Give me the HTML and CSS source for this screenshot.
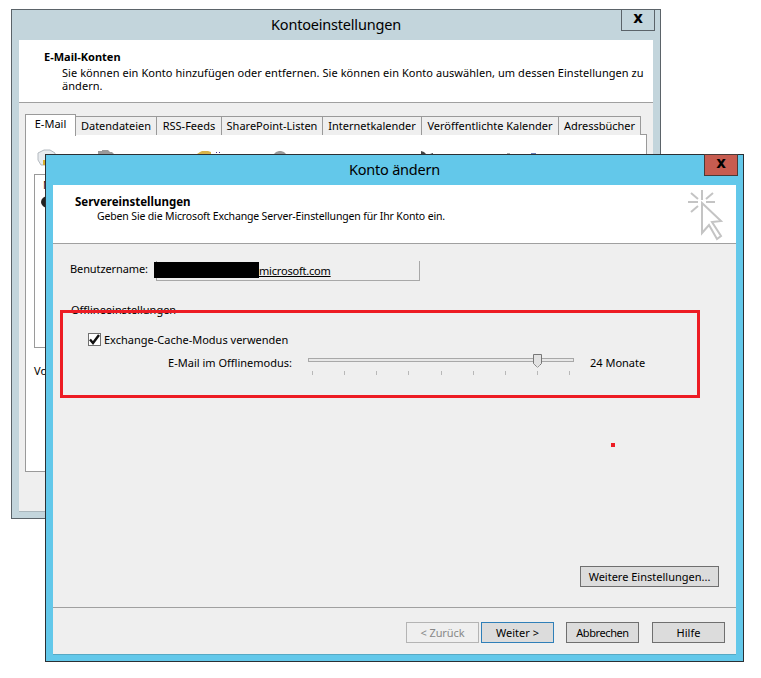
FILE: index.html
```html
<!DOCTYPE html>
<html lang="de">
<head>
<meta charset="utf-8">
<title>Konto ändern</title>
<link rel="stylesheet" href="styles.css">
</head>
<body>
<section class="window window-back">
  <header class="titlebar">
    <h1 class="title">Kontoeinstellungen</h1>
    <button class="close" aria-label="Schließen">x</button>
  </header>
  <div class="client">
    <div class="back-head">
      <h2 class="head-title">E-Mail-Konten</h2>
      <p class="head-text">Sie können ein Konto hinzufügen oder entfernen. Sie können ein Konto auswählen, um dessen Einstellungen zu ändern.</p>
    </div>
    <div class="back-body">
      <div class="tabs">
        <span class="tab tab-active">E-Mail</span>
        <span class="tab tab-1">Datendateien</span>
        <span class="tab tab-2">RSS-Feeds</span>
        <span class="tab tab-3">SharePoint-Listen</span>
        <span class="tab tab-4">Internetkalender</span>
        <span class="tab tab-5">Veröffentlichte Kalender</span>
        <span class="tab tab-6">Adressbücher</span>
      </div>
      <div class="pane">
        <svg class="toolbar" width="620" height="30" viewBox="0 0 620 30">
          <path d="M12 17l6-3h6l5 3v9l-4 3H15l-3-5z" fill="#e8ebee" stroke="#b4bac0"/>
          <path d="M17 24h6v5h-6z" fill="#d9b030"/>
          <path d="M72 18v-3h4v-1h6l2 2h2l2 2z" fill="#9a9a9a"/>
          <path d="M171 18l3-2 2-1h6l3 1v2z" fill="#d9b44a"/>
          <path d="M190 16h1v1h-1zM193 16h1v1h-1z" fill="#4b2a90"/>
          <path d="M248 18l2-2 3-1h2l3 1 2 2z" fill="#9a9a9a"/>
          <path d="M395 15l3 1 2 2h-5zM404 18l3-1v1z" fill="#444"/>
          <path d="M481 17h3v1h-3z" fill="#a8a8a8"/>
          <path d="M505 17h5v1h-5z" fill="#6b7fb8"/>
        </svg>
        <div class="listbox"><span class="list-head">Name</span><span class="list-dot"></span></div>
        <p class="pane-note">Vom</p>
      </div>
    </div>
  </div>
</section>

<section class="window window-front">
  <header class="titlebar titlebar-front">
    <h1 class="title">Konto ändern</h1>
    <button class="close close-front" aria-label="Schließen">x</button>
  </header>
  <div class="client">
    <div class="front-head">
      <h2 class="head-title head-title-front">Servereinstellungen</h2>
      <p class="head-sub">Geben Sie die Microsoft Exchange Server-Einstellungen für Ihr Konto ein.</p>
      <svg class="head-icon" width="40" height="54" viewBox="0 0 40 54" fill="none" stroke="#c4c4c4">
        <path stroke-width="2" d="M17 2v10M3 14h10M6 5l7 6M28 5l-7 6M21 14h9M6 24l7-6"/>
        <path stroke-width="2" d="M17 15l19 18-9 1 9 14-4 3-8-14-7 8z" fill="#fff"/>
      </svg>
    </div>
    <div class="front-body">
      <div class="user-row">
        <span class="user-label">Benutzername:</span>
        <div class="user-field"><span class="redact"></span><a class="user-link">microsoft.com</a></div>
      </div>
      <div class="group-label">Offlineeinstellungen</div>
      <label class="check-row">
        <span class="checkbox"><svg width="11" height="11" viewBox="0 0 11 11"><path d="M1 5.500l3 3.500 6-8" fill="none" stroke="#111" stroke-width="2.400"/></svg></span>
        <span>Exchange-Cache-Modus verwenden</span>
      </label>
      <div class="slider-row">
        <span class="slider-label">E-Mail im Offlinemodus:</span>
        <div class="slider">
          <div class="track"></div>
          <svg class="thumb" width="9" height="14" viewBox="0 0 9 14"><path d="M.5.5h8v9l-4 4-4-4z" fill="#e2e2e2" stroke="#777"/><path d="M1 10.500l3.500 3.500 3.500-3.500" fill="none" stroke="#efefef" stroke-dasharray="1 1"/></svg>
          <div class="ticks"><i></i><i></i><i></i><i></i><i></i><i></i><i></i><i></i><i></i></div>
        </div>
        <span class="slider-value">24 Monate</span>
      </div>
      <button class="btn btn-more">Weitere Einstellungen...</button>
    </div>
    <footer class="front-foot">
      <button class="btn btn-disabled" disabled>&lt; Zurück</button>
      <button class="btn btn-default">Weiter &gt;</button>
      <button class="btn btn-cancel">Abbrechen</button>
      <button class="btn btn-help">Hilfe</button>
    </footer>
  </div>
</section>

<div class="mark-box"></div>
<div class="mark-dot"></div>
</body>
</html>
```
FILE: styles.css
```css
* { box-sizing: border-box; }
html, body { margin: 0; padding: 0; }
body {
  width: 761px;
  height: 678px;
  position: relative;
  overflow: hidden;
  background: #fff;
  color: #000;
  font-family: "Noto Sans", "Open Sans", sans-serif;
  font-size: 11px;
  line-height: 15px;
}
h1, h2, p { margin: 0; font-weight: normal; }

.window { position: absolute; display: flex; flex-direction: column; }
.window-back {
  left: 11px; top: 9px; width: 650px; height: 510px;
  background: #c3d5dc;
  border: 1px solid #5b6369;
}
.window-front {
  left: 45px; top: 154px; width: 699px; height: 508px;
  background: #63c8ea;
  border: 1px solid #2b3034;
}
.titlebar {
  flex: none;
  height: 30px;
  display: flex;
  align-items: center;
  justify-content: center;
  position: relative;
}
.title { font-size: 14.500px; line-height: 28px; padding-bottom: 2px; letter-spacing: -.2px; }
.close {
  position: absolute;
  top: -1px; right: 5px;
  width: 34px; height: 22px;
  padding: 0 0 4px;
  background: transparent;
  border: 1px solid #5b6369;
  font: bold 15px/15px "DejaVu Sans", sans-serif;
  color: #000;
}
.close-front { background: #c75c50; border-color: #4a3a38; }

.client {
  flex: 1;
  display: flex;
  flex-direction: column;
  margin: 0 7px 7px;
  background: #efefef;
  min-height: 0;
}
.window-back .client { box-shadow: 0 1px 0 #aab6bc; }
.window-front .client { box-shadow: 0 1px 0 #57a9c4; }

.back-head {
  flex: none;
  height: 63px;
  background: #fff;
  border-bottom: 1px solid #a0a0a0;
  padding: 9px 10px 0 25px;
}
.head-title { font-size: 11px; line-height: 15px; font-weight: 700; }
.head-title-front { font-size: 11.500px; }
.head-text { padding-left: 18px; line-height: 13px; margin-top: 2px; width: 610px; letter-spacing: .05px; }

.back-body { flex: 1; padding: 11px 6px 0; display: flex; flex-direction: column; min-height: 0; }
.tabs { display: flex; align-items: flex-end; height: 22px; position: relative; z-index: 1; }
.tab {
  height: 19px;
  margin-bottom: 1px;
  padding-bottom: 2px;
  display: flex;
  align-items: center;
  justify-content: center;
  border: 1px solid #9a9a9a;
  border-left: 0;
  border-bottom: 0;
  background: #efefef;
}
.tab-active {
  width: 51px; height: 22px; margin-bottom: 0;
  align-items: flex-start;
  padding: 1px 0 0;
  border-left: 1px solid #9a9a9a;
  background: #fff;
}
.tab-1 { width: 81px; }
.tab-2 { width: 65px; }
.tab-3 { width: 101px; }
.tab-4 { width: 99px; }
.tab-5 { width: 137px; }
.tab-6 { width: 82px; }
.pane {
  width: 622px;
  height: 338px;
  margin-top: -2px;
  background: #fff;
  border: 1px solid #9a9a9a;
  padding-top: 1px;
}
.toolbar { display: block; }
.listbox {
  margin: 8px 8px 0;
  height: 174px;
  border: 1px solid #9a9a9a;
  position: relative;
  padding: 3px 0 0 8px;
}
.list-head { display: block; line-height: 14px; color: #301018; }
.list-dot {
  display: block;
  width: 14px; height: 12px;
  margin: 4px 0 0 -2px;
  border-radius: 50%;
  background: #222;
}
.pane-note { margin: 15px 0 0 8px; }

.front-head {
  flex: none;
  height: 59px;
  position: relative;
  background: #fff;
  border-bottom: 1px solid #a0a0a0;
  padding: 9px 0 0 22px;
}
.head-sub { padding-left: 22px; line-height: 15px; font-size: 10.500px; letter-spacing: -.15px; }
.head-icon { position: absolute; right: 11px; top: 3px; }

.front-body {
  flex: 1;
  display: flex;
  flex-direction: column;
  min-height: 0;
}
.user-row { display: flex; margin-top: 17px; height: 19px; }
.user-label { width: 103px; padding-left: 17px; line-height: 15px; letter-spacing: -.1px; }
.user-field {
  width: 264px;
  height: 20px;
  border-left: 1px solid #a8a8a8;
  border-right: 1px solid #a8a8a8;
  border-bottom: 1px solid #a8a8a8;
  display: flex;
  position: relative;
  padding-left: 102px;
  padding-top: 2px;
}
.redact { position: absolute; left: -3px; top: 1px; width: 105px; height: 16px; background: #000; }
.user-link { text-decoration: underline; line-height: 15px; letter-spacing: -.2px; }
.group-label { margin-top: 22px; padding-left: 18px; height: 15px; }
.check-row { display: flex; align-items: center; gap: 3px; margin-top: 15px; padding-left: 35px; height: 14px; }
.checkbox {
  width: 13px; height: 13px;
  border: 1px solid #707070;
  background: #fff;
  display: flex;
  align-items: center;
  justify-content: center;
}
.slider-row { display: flex; margin-top: 8px; height: 22px; }
.slider-label { width: 239px; text-align: right; padding-top: 1px; }
.slider { width: 266px; margin-left: 16px; position: relative; padding-top: 4px; }
.track { height: 4px; background: #e8e8e8; border: 1px solid #a8a8a8; }
.thumb { position: absolute; left: 225px; top: 0; display: block; }
.ticks { display: flex; justify-content: space-between; padding: 0 4px; margin-top: 9px; }
.ticks i { display: block; width: 1px; height: 4px; background: #b8b8b8; }
.slider-value { margin-left: 16px; padding-top: 1px; }

.btn {
  font: inherit;
  width: 73px;
  height: 21px;
  padding: 0;
  background: #dcdcdc;
  border: 1px solid #6f6f6f;
  color: #000;
}
.btn-more { flex: none; width: 139px; margin: auto 17px 20px auto; }
.btn-disabled { background: #efefef; border-color: #b4b4b4; color: #888; font-size: 11px; letter-spacing: -.1px; }
.btn-default { border-color: #2f7fb8; margin-left: 2px; }
.btn-cancel { margin-left: 12px; font-size: 11px; letter-spacing: -.4px; }
.btn-help { margin-left: 13px; }
.front-foot {
  flex: none;
  height: 47px;
  border-top: 1px solid #a0a0a0;
  display: flex;
  justify-content: flex-end;
  padding: 14px 11px 0 0;
}

.mark-box {
  position: absolute;
  left: 60px; top: 310px;
  width: 640px; height: 88px;
  border: 3px solid #ed1c24;
}
.mark-dot {
  position: absolute;
  left: 611px; top: 443px;
  width: 4px; height: 4px;
  background: #ed1c24;
}
```
